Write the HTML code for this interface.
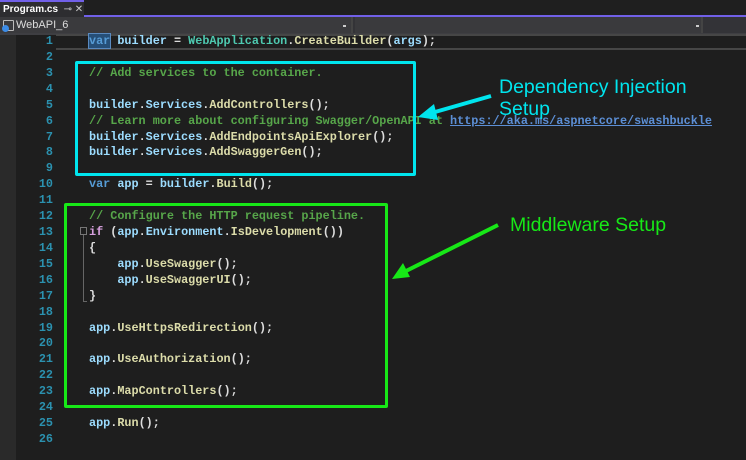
<!DOCTYPE html>
<html><head><meta charset="utf-8"><style>
*{margin:0;padding:0;box-sizing:border-box}
body{width:746px;height:460px;overflow:hidden;background:#1e1e1e;position:relative;font-family:"Liberation Mono",monospace}
.top{position:absolute;left:0;top:0;width:746px;height:16px;background:#1f1f1f}
.tab{position:absolute;left:0;top:0;width:84px;height:17px;background:#2d2d30;border-top:2px solid #7160e8;color:#fff;font:bold 10px "Liberation Sans",sans-serif;padding:2px 0 0 3px}
.pl{position:absolute;left:84px;top:15px;width:662px;height:2px;background:#7160e8}
.nav{position:absolute;left:0;top:17px;width:746px;height:18px;background:#333337;border-bottom:2px solid #3e3e42}
.dd{position:absolute;top:0;height:16px;background:#3a3a3d;border-right:2px solid #444}
.navt{position:absolute;left:16px;top:19px;color:#ddd;font:11px "Liberation Sans",sans-serif}
.gut{position:absolute;left:0;top:35px;width:16px;height:425px;background:#2a2a2a}
.ln{position:absolute;left:16px;width:37px;text-align:right;color:#2b91af;font-size:11.8px;font-weight:bold}
.cd{position:absolute;left:89px;color:#dcdcdc;font-size:11.8px;white-space:pre;font-weight:bold}
.v{color:#9cdcfe}.m{color:#dcdcaa}.t{color:#4ec9b0}.k{color:#569cd6}.c{color:#57a64a}.i{color:#d8a0df}.u{color:#5c8fd6;text-decoration:underline}
.cur{position:absolute;left:56px;top:34px;width:690px;height:16px;border-top:2px solid #464646;border-bottom:2px solid #464646}
.box{position:absolute;border:3px solid;border-radius:2px}
.ann{position:absolute;font:19.5px "Liberation Sans",sans-serif;line-height:22px}
</style></head><body>
<div class="top"></div><div class="pl"></div>
<div class="tab">Program.cs <span style="font-weight:normal;color:#ccc">&nbsp;⊸ ✕</span></div>
<div class="nav"><div class="dd" style="left:0;width:353px"></div><div class="dd" style="left:355px;width:348px"></div></div>
<div style="position:absolute;left:3px;top:20px;width:11px;height:11px;border:1px solid #bbb;border-radius:1px"></div>
<div style="position:absolute;left:2px;top:25px;width:7px;height:7px;background:#3c8ce7;border-radius:50%"></div>
<div class="navt">WebAPI_6</div>
<div style="position:absolute;left:343px;top:25px;width:3px;height:2px;background:#ccc"></div>
<div style="position:absolute;left:696px;top:25px;width:3px;height:2px;background:#ccc"></div>
<div class="gut"></div>
<div class="cur"></div>
<div id="L"></div>
<script>
var lines=[
'<span style="background:#264f78;outline:1px solid #5a8ac0" class="k">var</span> <span class="v">builder</span> = <span class="t">WebApplication</span>.<span class="m">CreateBuilder</span>(<span class="v">args</span>);',
'','<span class="c">// Add services to the container.</span>','',
'<span class="v">builder</span>.<span class="v">Services</span>.<span class="m">AddControllers</span>();',
'<span class="c">// Learn more about configuring Swagger/OpenAPI at </span><span class="u">https://aka.ms/aspnetcore/swashbuckle</span>',
'<span class="v">builder</span>.<span class="v">Services</span>.<span class="m">AddEndpointsApiExplorer</span>();',
'<span class="v">builder</span>.<span class="v">Services</span>.<span class="m">AddSwaggerGen</span>();',
'','<span class="k">var</span> <span class="v">app</span> = <span class="v">builder</span>.<span class="m">Build</span>();','',
'<span class="c">// Configure the HTTP request pipeline.</span>',
'<span class="i">if</span> (<span class="v">app</span>.<span class="v">Environment</span>.<span class="m">IsDevelopment</span>())',
'{','    <span class="v">app</span>.<span class="m">UseSwagger</span>();','    <span class="v">app</span>.<span class="m">UseSwaggerUI</span>();','}','',
'<span class="v">app</span>.<span class="m">UseHttpsRedirection</span>();','',
'<span class="v">app</span>.<span class="m">UseAuthorization</span>();','',
'<span class="v">app</span>.<span class="m">MapControllers</span>();','',
'<span class="v">app</span>.<span class="m">Run</span>();',''];
var h='';for(var n=0;n<26;n++){var y=34+n*15.92;
h+='<div class="ln" style="top:'+y+'px">'+(n+1)+'</div><div class="cd" style="top:'+y+'px">'+lines[n]+'</div>';}
document.getElementById('L').outerHTML=h;
</script>
<div style="position:absolute;left:80px;top:227px;width:7px;height:8px;border:1px solid #777"></div>
<div style="position:absolute;left:83px;top:235px;width:4px;height:67px;border:1px solid #666;border-right:none;border-top:none"></div>
<div class="box" style="left:75px;top:61px;width:341px;height:115px;border-color:#00e5ee"></div>
<div class="box" style="left:64px;top:203px;width:324px;height:205px;border-color:#17e817"></div>
<div class="ann" style="left:499px;top:76px;color:#00e5ee">Dependency Injection<br>Setup</div>
<div class="ann" style="left:510px;top:214px;color:#17e817">Middleware Setup</div>
<svg style="position:absolute;left:0;top:0" width="746" height="460">
<line x1="491" y1="96" x2="428" y2="114" stroke="#00e5ee" stroke-width="4"/>
<polygon points="418,117 434,104 438,120" fill="#00e5ee"/>
<line x1="498" y1="225" x2="402" y2="273" stroke="#17e817" stroke-width="4"/>
<polygon points="392,279 403,263 410,277" fill="#17e817"/>
</svg>
</body></html>
